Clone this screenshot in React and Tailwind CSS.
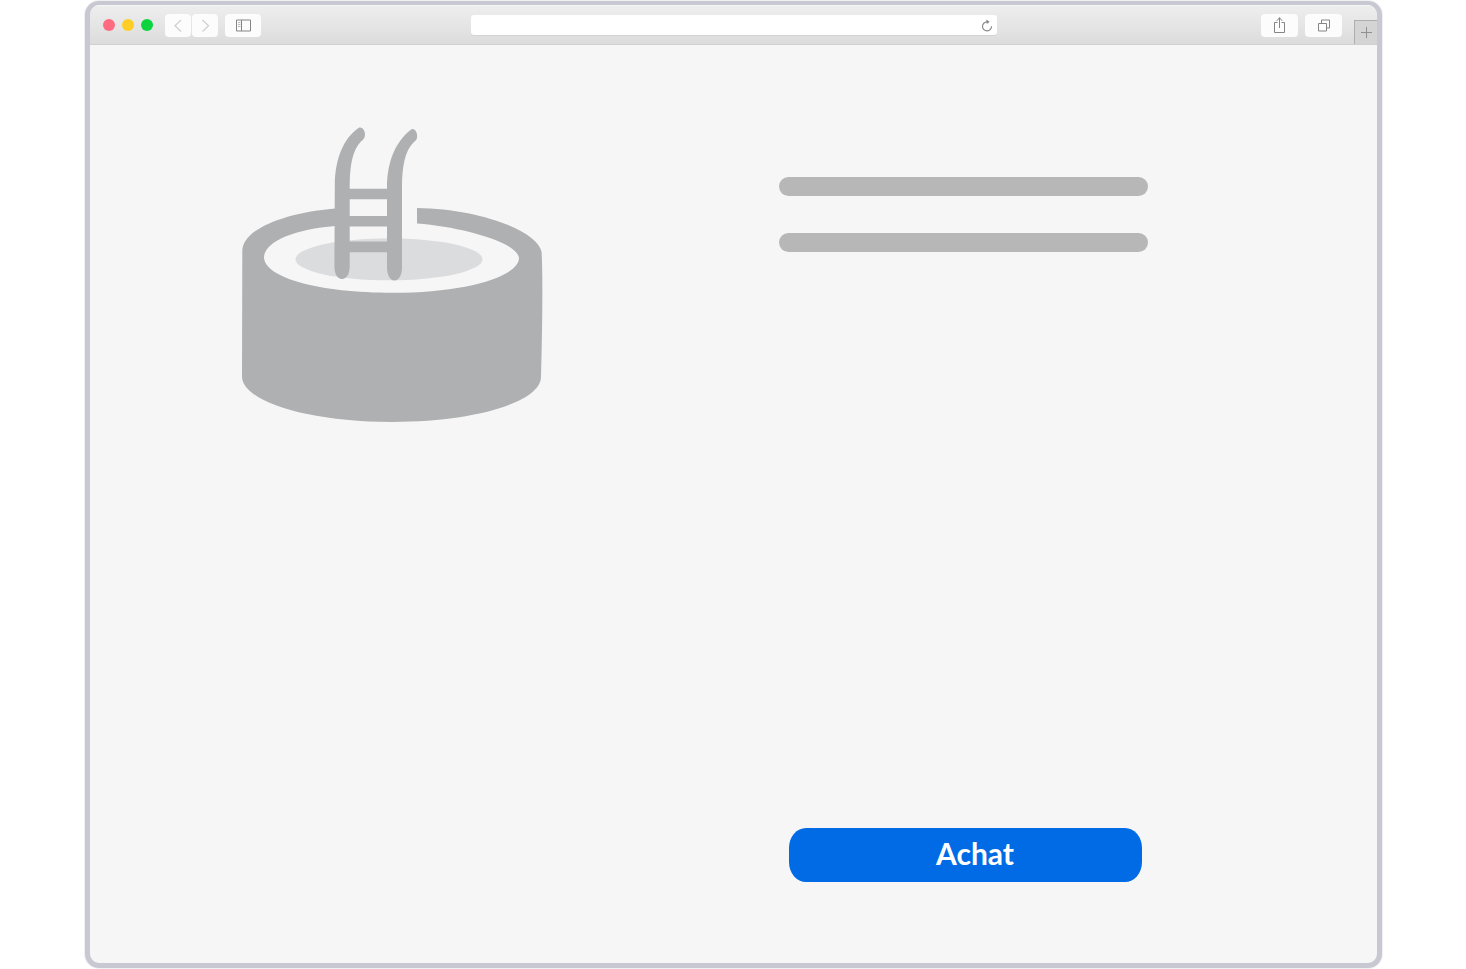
import React from "react";

const toolButton =
  "flex h-[23px] items-center justify-center rounded-[4px] bg-[#fcfcfc]";

function Toolbar() {
  return (
    <header className="grid h-10 grid-cols-[1fr_minmax(0,526px)_1fr] items-center border-t border-b border-t-[#f5f5f6] border-b-[#d0d0d0] bg-linear-to-b from-[#eeeeee] to-[#dcdcdc]">
      <div className="flex items-center pl-[13px]">
        <div className="flex gap-[7px]">
          <span className="size-3 rounded-full bg-[#ff6b80]" />
          <span className="size-3 rounded-full bg-[#ffce26]" />
          <span className="size-3 rounded-full bg-[#0cd43e]" />
        </div>
        <div className="ml-3 flex gap-px">
          <button type="button" aria-label="Précédent" className={`${toolButton} w-[26px]`}>
            <svg width="26" height="23" viewBox="0 0 26 23" fill="none" stroke="#d0d0d0" strokeWidth="1.3">
              <path d="M16 6L10 11.7L16 17.5" />
            </svg>
          </button>
          <button type="button" aria-label="Suivant" className={`${toolButton} w-[26px]`}>
            <svg width="26" height="23" viewBox="0 0 26 23" fill="none" stroke="#d0d0d0" strokeWidth="1.3">
              <path d="M10.5 6L16.5 11.7L10.5 17.5" />
            </svg>
          </button>
        </div>
        <button type="button" aria-label="Barre latérale" className={`${toolButton} ml-[7px] w-[36px]`}>
          <svg width="36" height="23" viewBox="0 0 36 23" fill="none" stroke="#858585">
            <path d="M11.5 6H25.5V17H11.5ZM16.5 6V17" />
            <path d="M13 8.5H15.5M13 10.5H15.5M13 12.5H15.5" stroke="#bdbdbd" />
          </svg>
        </button>
      </div>

      <div className="flex h-5 items-center rounded-[3px] bg-white shadow-[0_1px_0_#d4d4d4]">
        <input aria-label="Adresse" className="h-full min-w-0 flex-1 bg-transparent px-2 text-xs outline-none" />
        <button type="button" aria-label="Actualiser" className="size-5">
          <svg width="20" height="20" viewBox="0 0 20 20" fill="none">
            <path d="M10 6.9A4.5 4.5 0 1 0 14.5 11.2" stroke="#858585" strokeWidth="1.1" />
            <path d="M9.3 4.6L12.6 6.7L9.8 8.9Z" fill="#858585" />
          </svg>
        </button>
      </div>

      <div className="flex h-full items-center justify-end">
        <button type="button" aria-label="Partager" className={`${toolButton} w-[37px]`}>
          <svg width="37" height="23" viewBox="0 0 37 23" fill="none" stroke="#858585">
            <path d="M16.5 8.5H13.5V18.5H23.5V8.5H20.5M18.5 14V3.5M15.8 6.8L18.5 3.8L21.2 6.8" />
          </svg>
        </button>
        <button type="button" aria-label="Onglets" className={`${toolButton} ml-[7px] w-[37px]`}>
          <svg width="37" height="23" viewBox="0 0 37 23" fill="none" stroke="#858585">
            <path d="M13.5 9.5H21.5V17H13.5ZM16.5 9V6H24.5V14H22" />
          </svg>
        </button>
        <button
          type="button"
          aria-label="Nouvel onglet"
          className="ml-3 flex h-6 w-[23px] items-center justify-center self-end border-t border-l border-[#aeaeae] bg-[#d4d4d4]"
        >
          <svg width="22" height="23" viewBox="0 0 22 23" fill="none" stroke="#909090">
            <path d="M6 11.5H17M11.5 6V17" />
          </svg>
        </button>
      </div>
    </header>
  );
}

function Pool() {
  return (
    <svg role="img" aria-label="Piscine" className="h-auto w-[302px] max-w-full" width="302" height="296" viewBox="242 127 302 296">
      <ellipse cx="389" cy="259.3" rx="93.5" ry="21" fill="#dbdcde" />
      <g fill="#afb0b2">
        <path d="M335 208.4C282 213 242.3 230 242.3 251L242 377C243 401 306 422 392 422C478 422 541 401 541 377C542.3 330 543 275 541.6 252C538 231 480 209 417 208V223.6C463 227 519 243 519 258.5C518 277 464 292.8 393 292.8C320 292.8 264 278 264 257C265 241 296 229 335 226Z" />
        <path d="M334.8 186C334.8 158 344 138 358.5 128C362 126 365 130.5 365 134.5C365 138 363.5 139.5 361 141.5C352.5 150 349.7 166 349.7 187V266C349.7 274 346.5 279 342 279C337.5 279 334.4 274 334.4 266Z" />
        <path d="M387 188C387 160 396.5 141 410.7 129.7C414 127.5 417.2 132 417.2 136C417.2 139 416 140.5 413.5 142.5C405 151 402 166 402 188V267C402 275 399 280.5 394.5 280.5C390 280.5 387 275 387 267Z" />
        <path d="M348 188.7H388V199.3H348ZM348 215.9H388V226.6H348ZM348 241.5H388V252.2H348Z" />
      </g>
    </svg>
  );
}

export default function App() {
  return (
    <div className="flex min-h-screen bg-white pt-px pr-[84px] pb-px pl-[85px] font-['Lato',sans-serif]">
      <div className="flex min-w-0 flex-1 flex-col overflow-hidden rounded-[14px] border-[5px] border-t-4 border-[#c8c8d3] bg-[#f6f6f6] shadow-[0_0_0_1px_#f0f0f3]">
        <Toolbar />
        <main className="grid flex-1 grid-cols-2 pt-[82px] pb-[81px]">
          <div className="pl-[152px]">
            <Pool />
          </div>
          <div className="flex flex-col pt-[50px] pl-[45px]">
            <div className="flex max-w-[369px] flex-col gap-[37px]">
              <div className="h-[19px] rounded-full bg-[#b7b7b7]" />
              <div className="h-[19px] rounded-full bg-[#b7b7b7]" />
            </div>
            <button
              type="button"
              className="mt-auto ml-[10px] h-[54px] w-full max-w-[353px] rounded-[17px/20px] bg-[#006be5] pb-1 pl-5 text-[30px] leading-none font-bold text-white"
            >
              Achat
            </button>
          </div>
        </main>
      </div>
    </div>
  );
}
